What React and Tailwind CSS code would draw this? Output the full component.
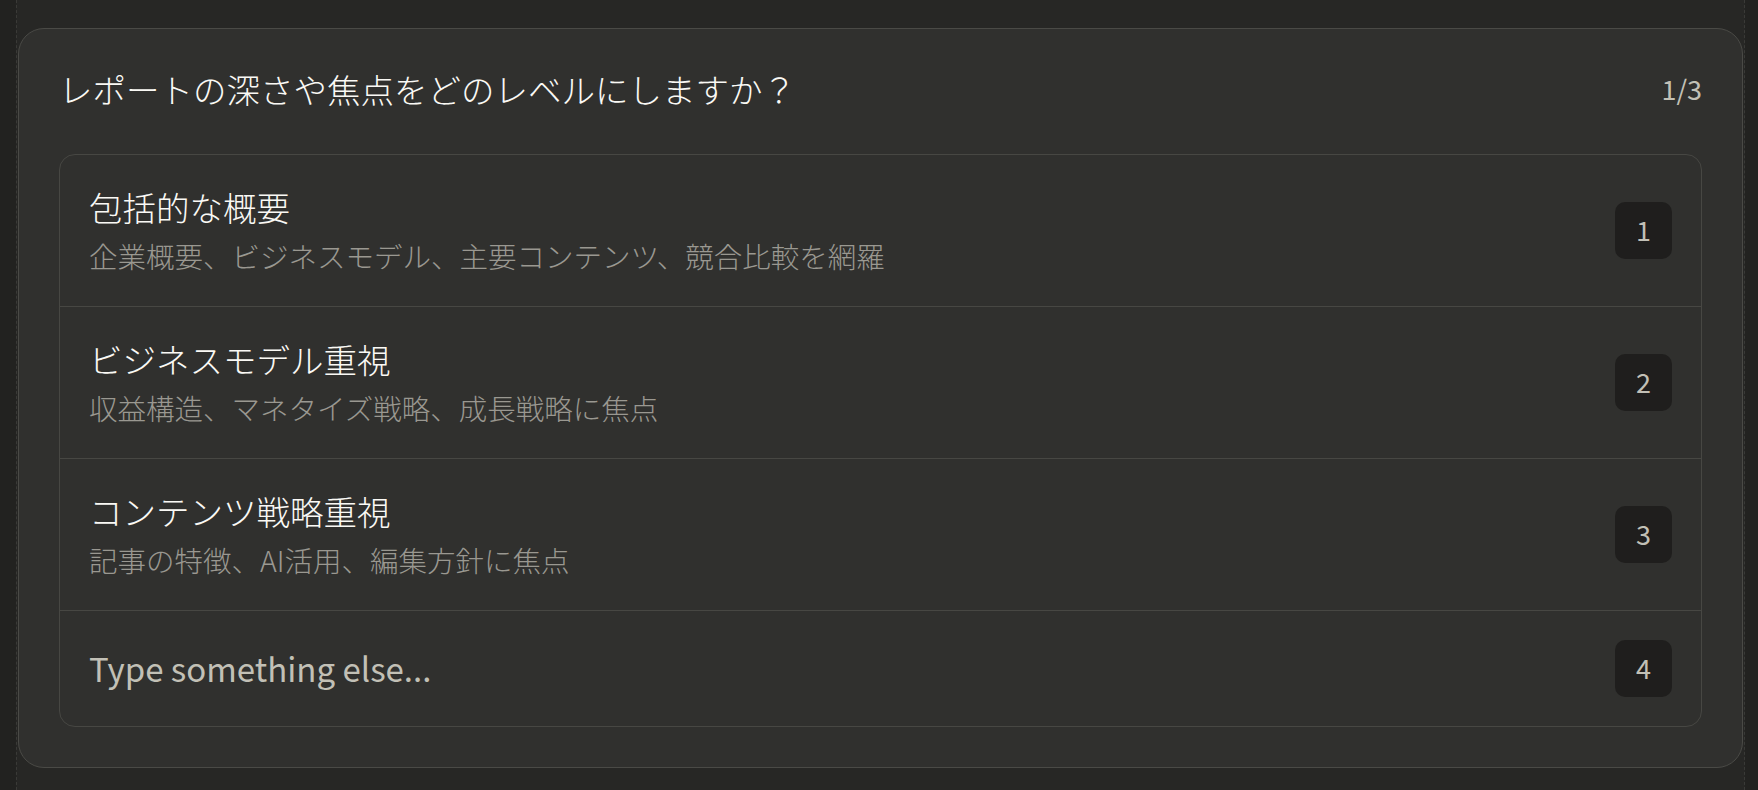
import React from "react";

const options = [
  { id: 1, title: "包括的な概要", desc: "企業概要、ビジネスモデル、主要コンテンツ、競合比較を網羅" },
  { id: 2, title: "ビジネスモデル重視", desc: "収益構造、マネタイズ戦略、成長戦略に焦点" },
  { id: 3, title: "コンテンツ戦略重視", desc: "記事の特徴、AI活用、編集方針に焦点" },
];

const font = { fontFamily: '"Noto Sans CJK JP", "Noto Sans", sans-serif' };

function Badge({ n }) {
  return (
    <div className="flex h-[57px] w-[57px] shrink-0 items-center justify-center rounded-[10px] bg-[#1f1e1d] text-[27px] text-[#c2c0b6]">
      {n}
    </div>
  );
}

export default function App() {
  return (
    <div className="h-[790px] overflow-hidden bg-[#222220]" style={font}>
      <div className="ml-[16px] h-full w-[1729px] border-x border-dashed border-[#3a3a37] bg-[#272725] px-px pt-[28px]">
        <div className="rounded-[26px] border border-[#4a4a46] bg-[#30302e] px-10 pb-10 pt-[38px]">
          <div className="flex items-center justify-between">
            <h2 className="text-[33.5px] font-light leading-[44px] text-[#faf9f5]">
              レポートの深さや焦点をどのレベルにしますか？
            </h2>
            <span className="text-[27px] leading-[44px] text-[#c2c0b6]">1/3</span>
          </div>

          <div className="mt-[43px] overflow-hidden rounded-[16px] border border-[#474743]">
            {options.map((o) => (
              <div
                key={o.id}
                className="flex h-[152px] items-center justify-between border-b border-[#474743] pl-[29px] pr-[29px]"
              >
                <div className="flex flex-col">
                  <span className="text-[33.5px] font-light leading-[44px] text-[#faf9f5]">{o.title}</span>
                  <span className="mt-[7px] text-[28.5px] font-light leading-[40px] text-[#9a9891]">{o.desc}</span>
                </div>
                <Badge n={o.id} />
              </div>
            ))}
            <div className="flex h-[115px] items-center justify-between pl-[29px] pr-[29px]">
              <span className="text-[33px] text-[#c2c0b6]">Type something else...</span>
              <Badge n={4} />
            </div>
          </div>
        </div>
      </div>
    </div>
  );
}
